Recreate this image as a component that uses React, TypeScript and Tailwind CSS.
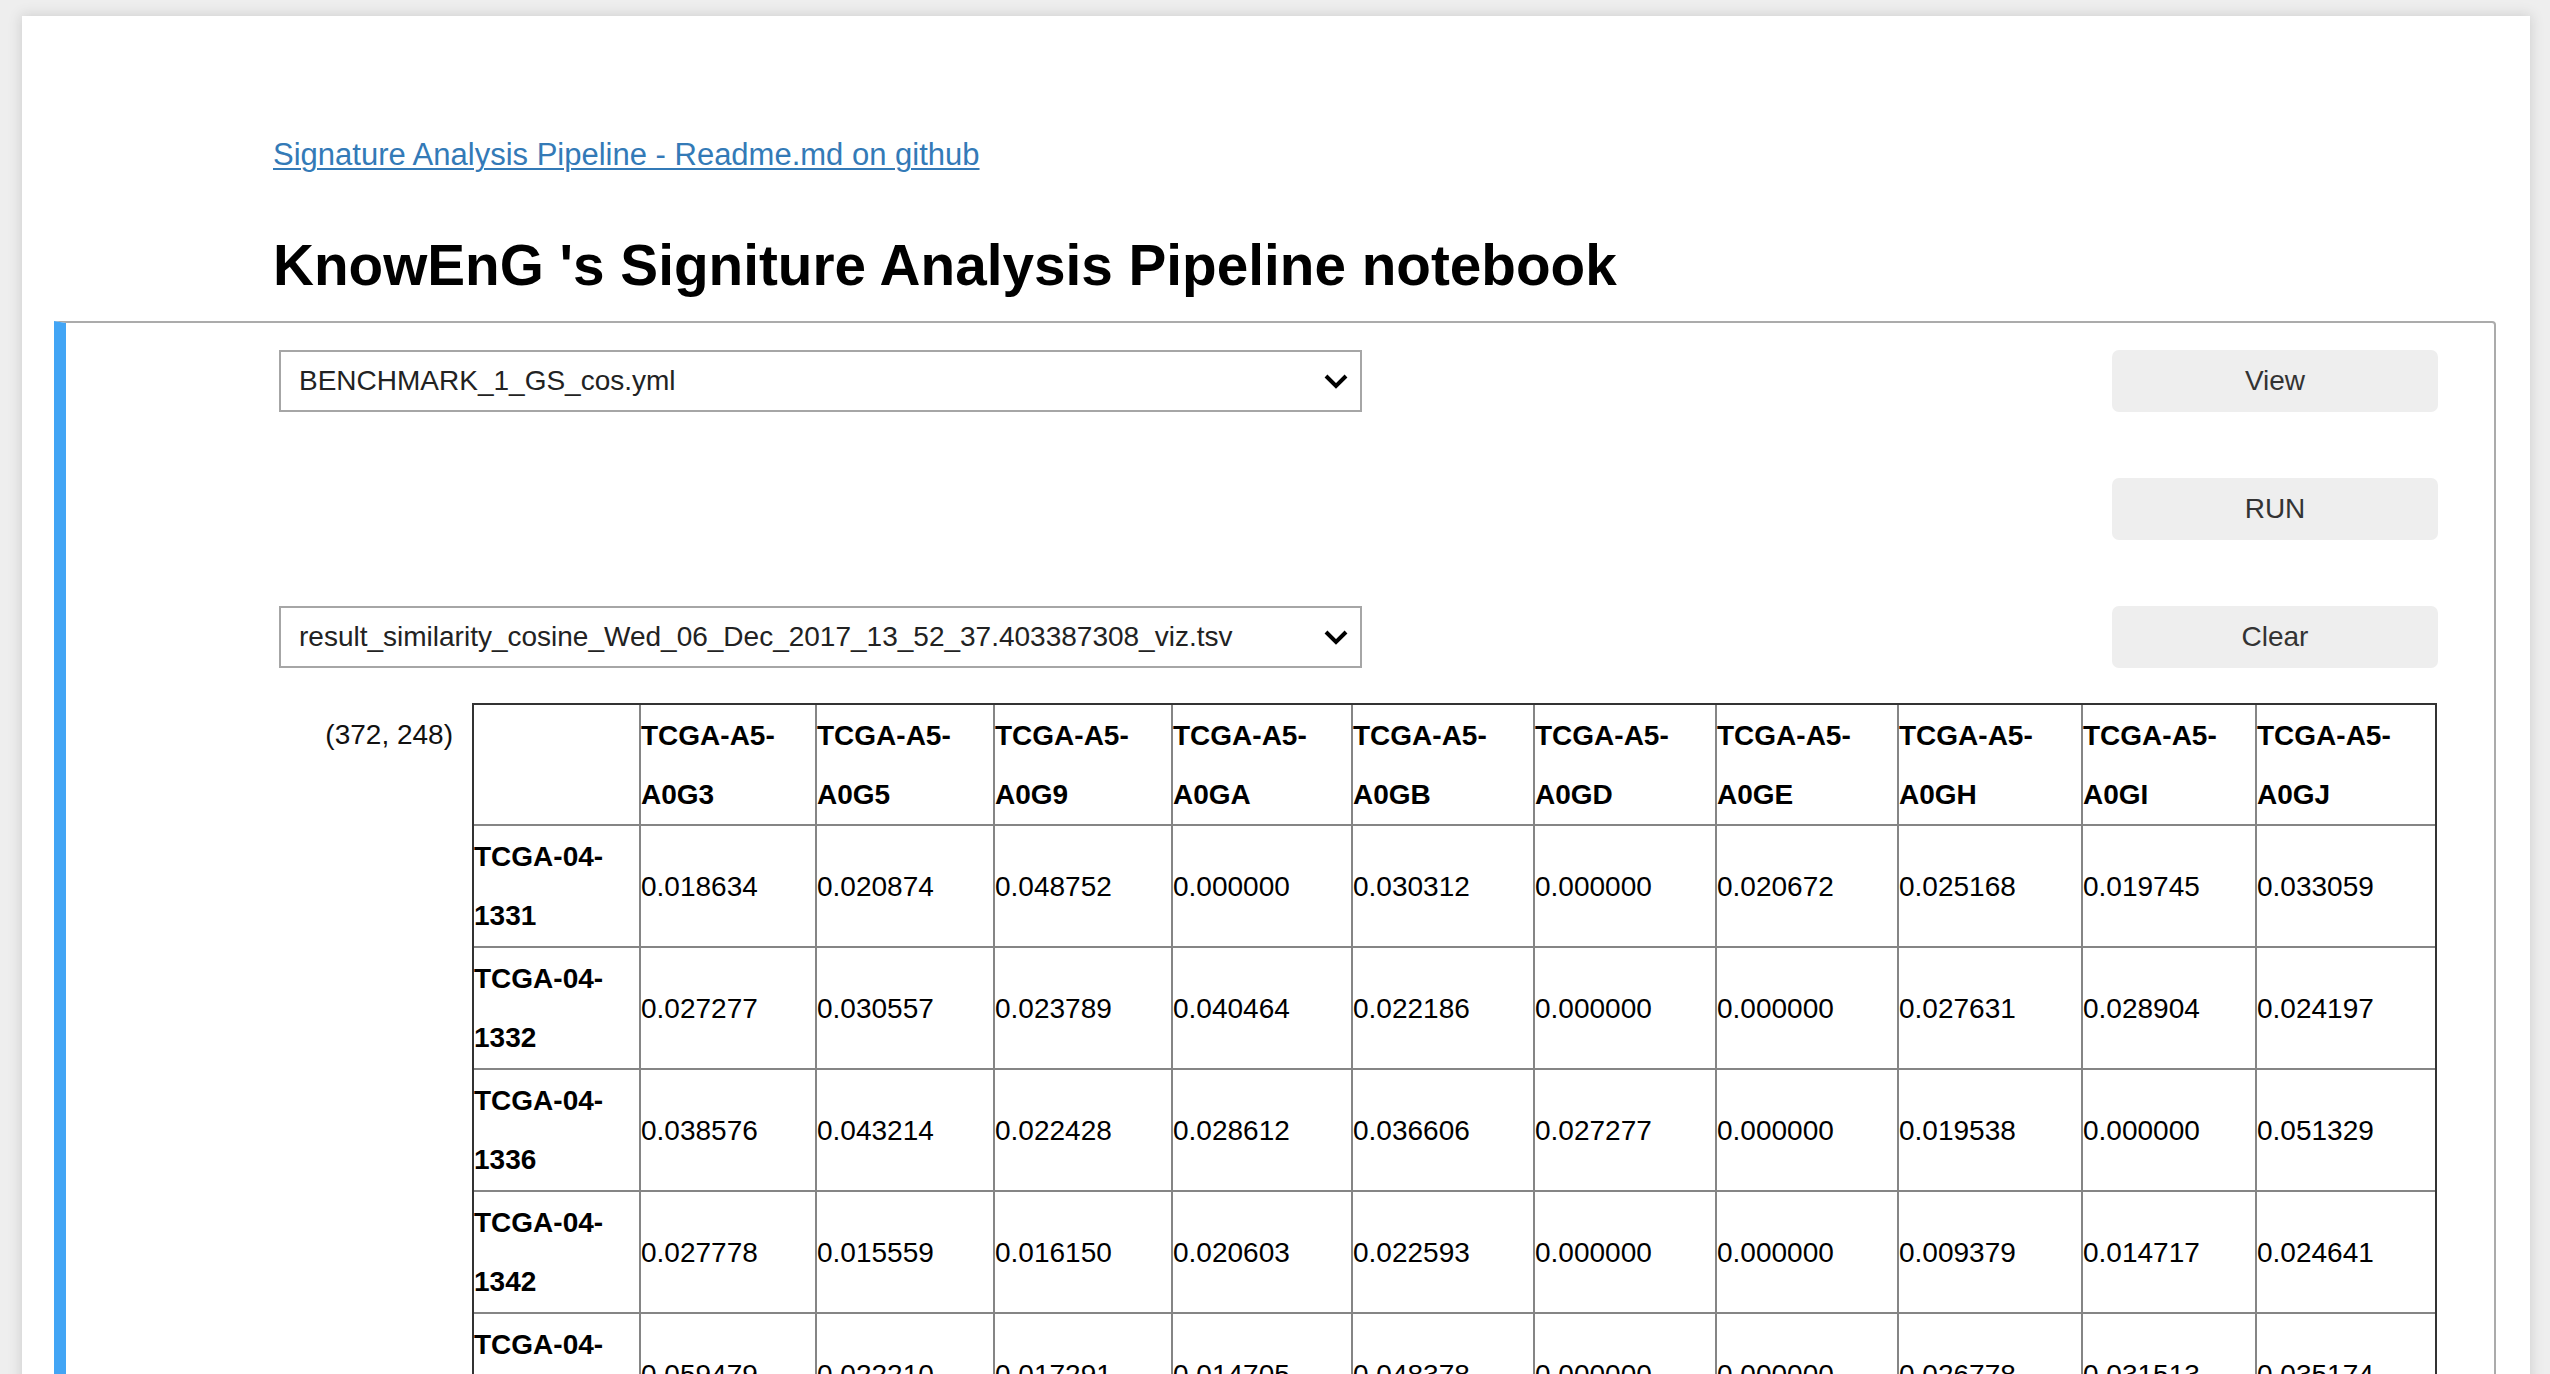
import React from "react";

const cols = ["A0G3", "A0G5", "A0G9", "A0GA", "A0GB", "A0GD", "A0GE", "A0GH", "A0GI", "A0GJ"];
const widthClasses = [
  "w-[167px]",
  "w-[176px]",
  "w-[178px]",
  "w-[178px]",
  "w-[180px]",
  "w-[182px]",
  "w-[182px]",
  "w-[182px]",
  "w-[184px]",
  "w-[174px]",
  "w-[178px]",
];

const rows: { id: string; vals: string[] }[] = [
  { id: "1331", vals: ["0.018634", "0.020874", "0.048752", "0.000000", "0.030312", "0.000000", "0.020672", "0.025168", "0.019745", "0.033059"] },
  { id: "1332", vals: ["0.027277", "0.030557", "0.023789", "0.040464", "0.022186", "0.000000", "0.000000", "0.027631", "0.028904", "0.024197"] },
  { id: "1336", vals: ["0.038576", "0.043214", "0.022428", "0.028612", "0.036606", "0.027277", "0.000000", "0.019538", "0.000000", "0.051329"] },
  { id: "1342", vals: ["0.027778", "0.015559", "0.016150", "0.020603", "0.022593", "0.000000", "0.000000", "0.009379", "0.014717", "0.024641"] },
  { id: "1343", vals: ["0.059479", "0.022210", "0.017291", "0.014705", "0.048378", "0.000000", "0.000000", "0.026778", "0.031513", "0.035174"] },
];

function Chevron() {
  return (
    <svg width="26" height="18" viewBox="0 0 26 18" className="shrink-0">
      <polyline points="3,4 13,14 23,4" fill="none" stroke="#000" strokeWidth="4" strokeLinecap="butt" strokeLinejoin="miter" />
    </svg>
  );
}

function FakeSelect({ value }: { value: string }) {
  return (
    <div className="w-[1083px] h-[62px] border-2 border-[#a6a6a6] bg-white flex items-center justify-between pl-[18px] pr-[11px] text-[28px] text-[#222]">
      <span className="whitespace-nowrap">{value}</span>
      <Chevron />
    </div>
  );
}

function Btn({ label }: { label: string }) {
  return (
    <div className="w-[326px] h-[62px] rounded-[7px] bg-[#eeeeee] flex items-center justify-center text-[28px] text-[#333]">
      {label}
    </div>
  );
}

export default function App() {
  return (
    <div
      className="w-[2550px] h-[1374px] overflow-hidden bg-[#eeeeee] pt-[16px] pl-[22px]"
      style={{ fontFamily: '"Liberation Sans", Arial, Helvetica, sans-serif' }}
    >
      <div className="w-[2508px] h-[1400px] bg-white shadow-[0_0_12px_1px_rgba(87,87,87,0.2)] pt-[117px]">
        <div className="pl-[251px] leading-[44px] text-[31px]">
          <a className="text-[#337ab7] underline underline-offset-[3px] decoration-[2px]">
            Signature Analysis Pipeline - Readme.md on github
          </a>
        </div>
        <h1 className="pl-[251px] mt-[57px] text-[56.7px] leading-[63px] font-bold text-black">
          KnowEnG 's Signiture Analysis Pipeline notebook
        </h1>
        <div className="ml-[32px] mt-[24px] w-[2442px] h-[1200px] border-2 border-[#ababab] border-l-[12px] border-l-[#42A5F5] rounded-tr-[4px] pt-[27px] pl-[213px] pr-[56px]">
          <div className="flex flex-col gap-[66px]">
            <div className="flex items-center justify-between">
              <FakeSelect value="BENCHMARK_1_GS_cos.yml" />
              <Btn label="View" />
            </div>
            <div className="flex items-center justify-end">
              <Btn label="RUN" />
            </div>
            <div className="flex items-center justify-between">
              <FakeSelect value="result_similarity_cosine_Wed_06_Dec_2017_13_52_37.403387308_viz.tsv" />
              <Btn label="Clear" />
            </div>
          </div>
          <div className="flex mt-[35px]">
            <div className="w-[174px] text-right text-[28px] leading-[59px] pt-[2px] text-[#111] whitespace-nowrap">
              (372, 248)
            </div>
            <div className="ml-[19px] border-2 border-[#333] self-start">
              <table className="table-fixed border-separate border-spacing-0 w-[1961px] text-[28px] leading-[59px] text-black">
                <thead>
                  <tr className="h-[121px]">
                    <th className={`${widthClasses[0]} border-r-2 border-b-2 border-[#858585] p-0`}></th>
                    {cols.map((c, i) => (
                      <th
                        key={c}
                        className={`${widthClasses[i + 1]} ${i < cols.length - 1 ? "border-r-2" : ""} border-b-2 border-[#858585] p-0 text-left font-bold align-middle`}
                      >
                        TCGA-A5-
                        <br />
                        {c}
                      </th>
                    ))}
                  </tr>
                </thead>
                <tbody>
                  {rows.map((r) => (
                    <tr key={r.id} className="h-[122px]">
                      <th className="border-r-2 border-b-2 border-[#858585] p-0 text-left font-bold align-middle">
                        TCGA-04-
                        <br />
                        {r.id}
                      </th>
                      {r.vals.map((v, i) => (
                        <td
                          key={i}
                          className={`${i < r.vals.length - 1 ? "border-r-2" : ""} border-b-2 border-[#858585] p-0 text-left align-middle`}
                        >
                          {v}
                        </td>
                      ))}
                    </tr>
                  ))}
                </tbody>
              </table>
            </div>
          </div>
        </div>
      </div>
    </div>
  );
}
